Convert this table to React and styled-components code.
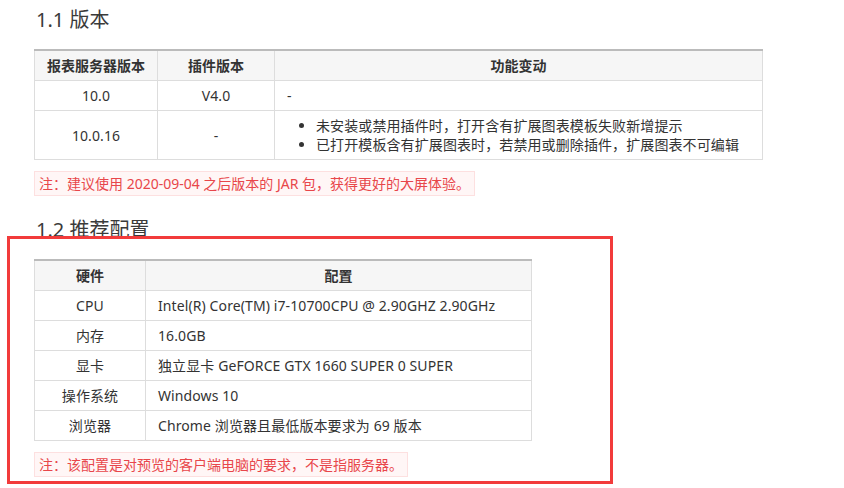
import React from "react";
import styled, { createGlobalStyle } from "styled-components";

const GlobalStyle = createGlobalStyle`
  html, body {
    margin: 0;
    padding: 0;
    background: #fff;
    min-height: 100vh;
  }
  body {
    font-family: "Noto Sans", "Noto Sans CJK SC", sans-serif;
    color: #333;
    font-size: 14px;
  }
`;

const versions = [
  { server: "10.0", plugin: "V4.0", change: ["-"] },
  {
    server: "10.0.16",
    plugin: "-",
    change: [
      "未安装或禁用插件时，打开含有扩展图表模板失败新增提示",
      "已打开模板含有扩展图表时，若禁用或删除插件，扩展图表不可编辑",
    ],
    list: true,
  },
];

const hardware = [
  ["CPU", "Intel(R) Core(TM) i7-10700CPU @ 2.90GHZ 2.90GHz"],
  ["内存", "16.0GB"],
  ["显卡", "独立显卡 GeFORCE GTX 1660 SUPER 0 SUPER"],
  ["操作系统", "Windows 10"],
  ["浏览器", "Chrome 浏览器且最低版本要求为 69 版本"],
];

export default function App() {
  return (
    <>
      <GlobalStyle />
      <Page>
        <Heading>1.1 版本</Heading>
        <Table width={729}>
          <colgroup>
            <col style={{ width: 123 }} />
            <col style={{ width: 117 }} />
            <col />
          </colgroup>
          <thead>
            <tr>
              <Th>报表服务器版本</Th>
              <Th>插件版本</Th>
              <Th>功能变动</Th>
            </tr>
          </thead>
          <tbody>
            {versions.map((v) => (
              <tr key={v.server}>
                <Td center>{v.server}</Td>
                <Td center>{v.plugin}</Td>
                <Td>
                  {v.list ? (
                    <Bullets>
                      {v.change.map((c) => (
                        <li key={c}>{c}</li>
                      ))}
                    </Bullets>
                  ) : (
                    v.change[0]
                  )}
                </Td>
              </tr>
            ))}
          </tbody>
        </Table>
        <Note>注：建议使用 2020-09-04 之后版本的 JAR 包，获得更好的大屏体验。</Note>

        <Section>
          <Heading>1.2 推荐配置</Heading>
          <Table width={498}>
            <colgroup>
              <col style={{ width: 111 }} />
              <col />
            </colgroup>
            <thead>
              <tr>
                <Th>硬件</Th>
                <Th>配置</Th>
              </tr>
            </thead>
            <tbody>
              {hardware.map(([k, v]) => (
                <tr key={k}>
                  <Td center>{k}</Td>
                  <Td>{v}</Td>
                </tr>
              ))}
            </tbody>
          </Table>
          <Note>注：该配置是对预览的客户端电脑的要求，不是指服务器。</Note>
          <Highlight />
        </Section>
      </Page>
    </>
  );
}

const Page = styled.div`
  padding: 6px 34px 0 34px;
  display: flex;
  flex-direction: column;
  align-items: flex-start;
`;

const Section = styled.div`
  position: relative;
  display: flex;
  flex-direction: column;
  align-items: flex-start;
  margin-top: 20px;
`;

const Heading = styled.h2`
  margin: 0 0 15px 2px;
  font-size: 20px;
  line-height: 28px;
  font-weight: 400;
  color: #3a3a3a;
`;

const Table = styled.table`
  width: ${(p) => p.width}px;
  border-collapse: collapse;
  border-top: 2px solid #bbb;
  table-layout: fixed;
`;

const Th = styled.th`
  background: #f6f6f6;
  border: 1px solid #ddd;
  border-top: none;
  padding: 5px 12px;
  line-height: 19px;
  font-weight: 700;
  color: #333;
  text-align: center;
`;

const Td = styled.td`
  border: 1px solid #ddd;
  padding: 5px 12px;
  line-height: 19px;
  color: #333;
  text-align: ${(p) => (p.center ? "center" : "left")};
  white-space: nowrap;
  letter-spacing: 0.1px;
`;

const Bullets = styled.ul`
  margin: 0;
  padding-left: 29px;
  li {
    line-height: 19px;
  }
`;

const Note = styled.div`
  margin-top: 11px;
  padding: 0 4px;
  line-height: 23px;
  color: #e8464a;
  background: #fff6f6;
  border: 1px solid #fde0e0;
`;

const Highlight = styled.div`
  position: absolute;
  left: -27px;
  top: 20px;
  width: 600px;
  height: 242px;
  border: 3px solid #f23b3b;
  pointer-events: none;
`;
